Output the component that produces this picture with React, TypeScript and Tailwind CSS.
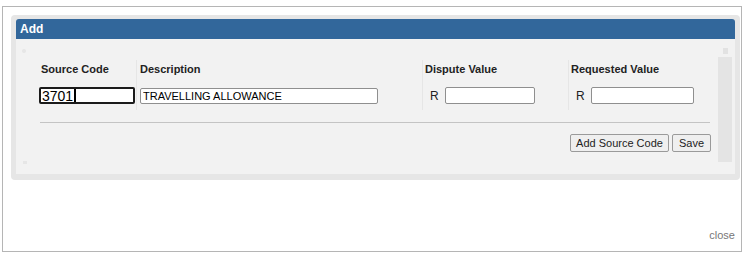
import React from "react";

const font = { fontFamily: '"Liberation Sans", Arial, sans-serif' };

function Caret() {
  return <span className="inline-block w-[2px] h-[13px] bg-black align-middle ml-px" />;
}

export default function App() {
  return (
    <div className="w-[750px] h-[255px] bg-white pt-[6px] pl-[2px]" style={font}>
      <div className="w-[740px] h-[246px] border border-[#b5b5b5] flex flex-col pt-[8px] pl-[8px]">
        <div className="w-[729px] bg-[#e6e6e6] rounded-[4px] pt-[4px] px-[5px] pb-[6px]">
          <div className="h-[20px] bg-[#32679b] rounded-t-[3px] flex items-center px-[4px] text-white font-bold text-[12px]">
            Add
          </div>
          <div className="relative h-[135px] bg-[#f2f2f2] flex">
            <span className="absolute left-[6px] top-[10px] w-[4px] h-[4px] rounded-full bg-[#e6e6e6]" />
            <span className="absolute left-[7px] bottom-[10px] w-[4px] h-[3px] bg-[#e6e6e6]" />
            <div className="flex-1 pl-[23px] pt-[21px] pr-[6px] text-[11px] text-[#222]">
              <div className="flex">
                <div className="w-[98px] border-r border-[#e6e6e6]">
                  <div className="h-[18px] flex items-center pl-[2px] font-bold">Source Code</div>
                  <div className="h-[32px] pt-[9px]">
                    <div className="w-[96px] h-[17px] border-2 border-[#1b1b1b] rounded-[2px] bg-white flex items-center pl-[1px] text-[14px] text-black leading-none">
                      3701<Caret />
                    </div>
                  </div>
                </div>
                <div className="w-[286px] border-r border-[#e6e6e6] pl-[3px]">
                  <div className="h-[18px] flex items-center font-bold">Description</div>
                  <div className="h-[32px] pt-[10px]">
                    <input
                      readOnly
                      value="TRAVELLING ALLOWANCE"
                      className="w-[238px] h-[16px] border border-[#8f8f8f] rounded-[2px] bg-white px-[2px] text-[11px] text-black outline-none"
                    />
                  </div>
                </div>
                <div className="w-[146px] border-r border-[#e6e6e6] pl-[2px]">
                  <div className="h-[18px] flex items-center font-bold">Dispute Value</div>
                  <div className="h-[32px] pt-[9px] flex items-start">
                    <span className="w-[20px] pl-[5px] h-[17px] flex items-center text-[12px]">R</span>
                    <input
                      readOnly
                      className="w-[90px] h-[17px] border border-[#8f8f8f] rounded-[2px] bg-white outline-none"
                    />
                  </div>
                </div>
                <div className="flex-1 pl-[2px]">
                  <div className="h-[18px] flex items-center font-bold">Requested Value</div>
                  <div className="h-[32px] pt-[9px] flex items-start">
                    <span className="w-[20px] pl-[5px] h-[17px] flex items-center text-[12px]">R</span>
                    <input
                      readOnly
                      className="w-[103px] h-[17px] border border-[#8f8f8f] rounded-[2px] bg-white outline-none"
                    />
                  </div>
                </div>
              </div>
              <div className="mt-[12px] ml-[1px] w-[670px] h-px bg-[#c4c4c4]" />
              <div className="mt-[11px] w-[672px] flex justify-end gap-[3px]">
                <button className="h-[18px] px-[5px] border border-[#9a9a9a] rounded-[2px] bg-[#efefef] text-[11px] text-[#222] leading-none">
                  Add Source Code
                </button>
                <button className="h-[18px] px-[6px] border border-[#9a9a9a] rounded-[2px] bg-[#efefef] text-[11px] text-[#222] leading-none">
                  Save
                </button>
              </div>
            </div>
            <div className="relative w-[14px] mt-[18px] mb-[12px] mr-[3px] bg-[#e4e4e4]">
              <span className="absolute left-[5px] -top-[9px] w-[5px] h-[6px] bg-[#e2e2e2]" />
            </div>
          </div>
        </div>
        <div className="flex-1 flex items-end justify-end pr-[6px] pb-[8px] text-[11px] text-[#777]">
          close
        </div>
      </div>
    </div>
  );
}
